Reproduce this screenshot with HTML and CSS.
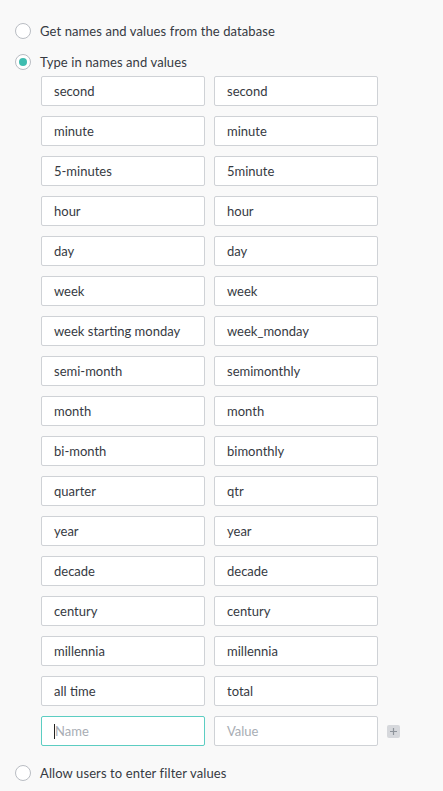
FILE: index.html
```html
<!DOCTYPE html>
<html>
<head>
<meta charset="utf-8">
<link rel="stylesheet" href="styles.css">
</head>
<body>
<div class="panel">
  <label class="option first">
    <span class="radio"></span>
    <span class="label">Get names and values from the database</span>
  </label>
  <label class="option second">
    <span class="radio checked"></span>
    <span class="label">Type in names and values</span>
  </label>
  <div class="pairs">
    <div class="row"><div class="field">second</div><div class="field">second</div></div>
    <div class="row"><div class="field">minute</div><div class="field">minute</div></div>
    <div class="row"><div class="field">5-minutes</div><div class="field">5minute</div></div>
    <div class="row"><div class="field">hour</div><div class="field">hour</div></div>
    <div class="row"><div class="field">day</div><div class="field">day</div></div>
    <div class="row"><div class="field">week</div><div class="field">week</div></div>
    <div class="row"><div class="field">week starting monday</div><div class="field">week_monday</div></div>
    <div class="row"><div class="field">semi-month</div><div class="field">semimonthly</div></div>
    <div class="row"><div class="field">month</div><div class="field">month</div></div>
    <div class="row"><div class="field">bi-month</div><div class="field">bimonthly</div></div>
    <div class="row"><div class="field">quarter</div><div class="field">qtr</div></div>
    <div class="row"><div class="field">year</div><div class="field">year</div></div>
    <div class="row"><div class="field">decade</div><div class="field">decade</div></div>
    <div class="row"><div class="field">century</div><div class="field">century</div></div>
    <div class="row"><div class="field">millennia</div><div class="field">millennia</div></div>
    <div class="row"><div class="field">all time</div><div class="field">total</div></div>
    <div class="row">
      <div class="field focused"><span class="caret"></span><span class="placeholder">Name</span></div>
      <div class="field"><span class="placeholder">Value</span></div>
      <span class="add">
        <svg width="13" height="13" viewBox="0 0 13 13"><path d="M6.5 3v7M3 6.5h7" stroke="#8e949b" stroke-width="1.2" fill="none"/></svg>
      </span>
    </div>
  </div>
  <label class="option third">
    <span class="radio"></span>
    <span class="label">Allow users to enter filter values</span>
  </label>
</div>
</body>
</html>
```

FILE: styles.css
```css
html, body {
  margin: 0;
  padding: 0;
  background: #f9f9f9;
}
body {
  font-family: Lato, "Noto Sans", sans-serif;
  font-size: 13px;
  color: #363a42;
  width: 443px;
  height: 791px;
  overflow: hidden;
}
.panel {
  padding: 23px 0 0 15px;
}
.option {
  display: flex;
  align-items: center;
  gap: 9px;
  height: 16px;
}
.option.second {
  margin-top: 15px;
}
.option.third {
  margin-top: 19px;
}
.radio {
  box-sizing: border-box;
  width: 16px;
  height: 16px;
  border-radius: 50%;
  border: 1px solid #b9bdc3;
  background: #fff;
  display: flex;
  align-items: center;
  justify-content: center;
}
.radio.checked::after {
  content: "";
  width: 8px;
  height: 8px;
  border-radius: 50%;
  background: #3fbdb0;
}
.label {
  letter-spacing: 0.1px;
}
.pairs {
  padding-left: 26px;
  margin-top: 6px;
  display: flex;
  flex-direction: column;
  gap: 10px;
}
.row {
  display: flex;
  align-items: center;
  gap: 9px;
}
.field {
  box-sizing: border-box;
  width: 164px;
  height: 30px;
  background: #fff;
  border: 1px solid #cfd2d6;
  border-radius: 2px;
  padding: 0 12px;
  display: flex;
  align-items: center;
  white-space: nowrap;
}
.field.focused {
  border-color: #5ccdc2;
}
.caret {
  display: inline-block;
  width: 1px;
  height: 15px;
  background: #222;
}
.placeholder {
  color: #a8adb4;
}
.add {
  width: 13px;
  height: 13px;
  background: #d6d8dc;
  border-radius: 2px;
  display: flex;
}
```
